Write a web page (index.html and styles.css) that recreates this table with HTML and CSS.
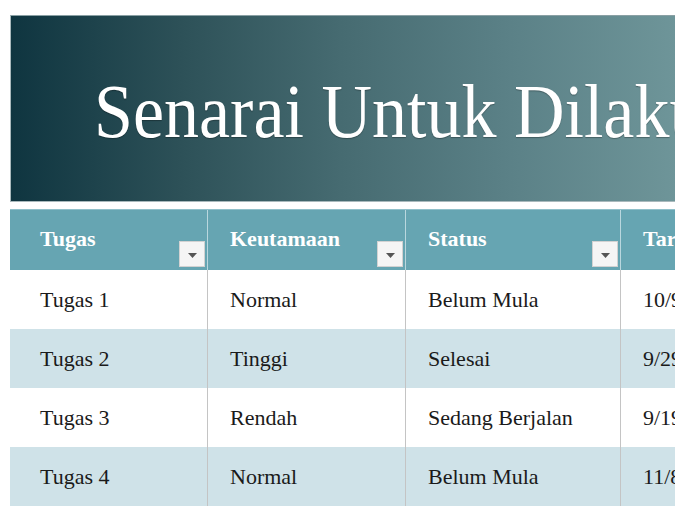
FILE: index.html
```html
<!DOCTYPE html>
<html lang="ms">
<head>
<meta charset="utf-8">
<title>Senarai Untuk Dilakukan</title>
<link rel="stylesheet" href="styles.css">
</head>
<body>
<div class="sheet">
  <header class="banner">
    <h1 class="title">Senarai Untuk Dilakukan</h1>
  </header>
  <div class="table">
    <div class="row head">
      <div class="cell c1"><span class="label">Tugas</span><span class="dd"><svg width="9" height="5" viewBox="0 0 9 5"><path d="M0 0h9L4.5 5z" fill="#555"/></svg></span></div>
      <div class="cell"><span class="label">Keutamaan</span><span class="dd"><svg width="9" height="5" viewBox="0 0 9 5"><path d="M0 0h9L4.5 5z" fill="#555"/></svg></span></div>
      <div class="cell c3"><span class="label">Status</span><span class="dd"><svg width="9" height="5" viewBox="0 0 9 5"><path d="M0 0h9L4.5 5z" fill="#555"/></svg></span></div>
      <div class="cell"><span class="label">Tarikh Mula</span><span class="dd"><svg width="9" height="5" viewBox="0 0 9 5"><path d="M0 0h9L4.5 5z" fill="#555"/></svg></span></div>
    </div>
    <div class="row">
      <div class="cell c1">Tugas 1</div>
      <div class="cell">Normal</div>
      <div class="cell c3">Belum Mula</div>
      <div class="cell">10/9/2013</div>
    </div>
    <div class="row alt">
      <div class="cell c1">Tugas 2</div>
      <div class="cell">Tinggi</div>
      <div class="cell c3">Selesai</div>
      <div class="cell">9/29/2013</div>
    </div>
    <div class="row">
      <div class="cell c1">Tugas 3</div>
      <div class="cell">Rendah</div>
      <div class="cell c3">Sedang Berjalan</div>
      <div class="cell">9/19/2013</div>
    </div>
    <div class="row alt">
      <div class="cell c1">Tugas 4</div>
      <div class="cell">Normal</div>
      <div class="cell c3">Belum Mula</div>
      <div class="cell">11/8/2013</div>
    </div>
  </div>
</div>
</body>
</html>
```

FILE: styles.css
```css
html, body {
  overflow: hidden;
  background: #ffffff;
}
body {
  margin: 0;
  padding: 15px 0 0 10px;
  font-family: "Liberation Serif", "Times New Roman", serif;
}
.sheet {
  width: 900px;
}
.banner {
  height: 187px;
  box-sizing: border-box;
  border: 1px solid #a9b9bc;
  border-top-color: #8aa0a4;
  background: linear-gradient(to right, #0f3540 0px, #2d5158 170px, #466b71 330px, #5b8187 500px, #6e9599 665px, #7ba1a5 900px);
  display: flex;
  align-items: center;
  padding-left: 83px;
}
.title {
  margin: 0;
  font-family: "Liberation Serif", "Times New Roman", serif;
  font-weight: normal;
  font-size: 70px;
  line-height: 1;
  color: #ffffff;
  white-space: nowrap;
  transform: scaleY(1.08);
  padding-top: 6px;
  text-shadow: 0 1px 1px rgba(0,0,0,0.3);
}
.table {
  margin-top: 7px;
}
.row {
  display: grid;
  grid-template-columns: 198px 198px 215px 260px;
  height: 59px;
  font-size: 22px;
  color: #1a1a1a;
}
.row.alt {
  background: #cfe2e8;
}
.row.head {
  height: 61px;
  background: #66a5b2;
  color: #ffffff;
  font-weight: bold;
  border-top: 1px solid #8fc0ca;
  box-sizing: border-box;
}
.cell {
  display: flex;
  align-items: center;
  justify-content: space-between;
  padding-left: 22px;
  padding-right: 2px;
  border-right: 1px solid #c4c4c4;
  white-space: nowrap;
  overflow: hidden;
}
.cell.c1 {
  padding-left: 30px;
}
.head .cell {
  border-right: 1px solid #b9d7de;
}
.label {
  padding-bottom: 2px;
}
.dd {
  align-self: flex-end;
  margin-bottom: 3px;
  width: 26px;
  height: 26px;
  box-sizing: border-box;
  background: #f5f5f5;
  border: 1px solid #d2d2d2;
  display: flex;
  align-items: center;
  justify-content: center;
  padding-top: 2px;
}
```
